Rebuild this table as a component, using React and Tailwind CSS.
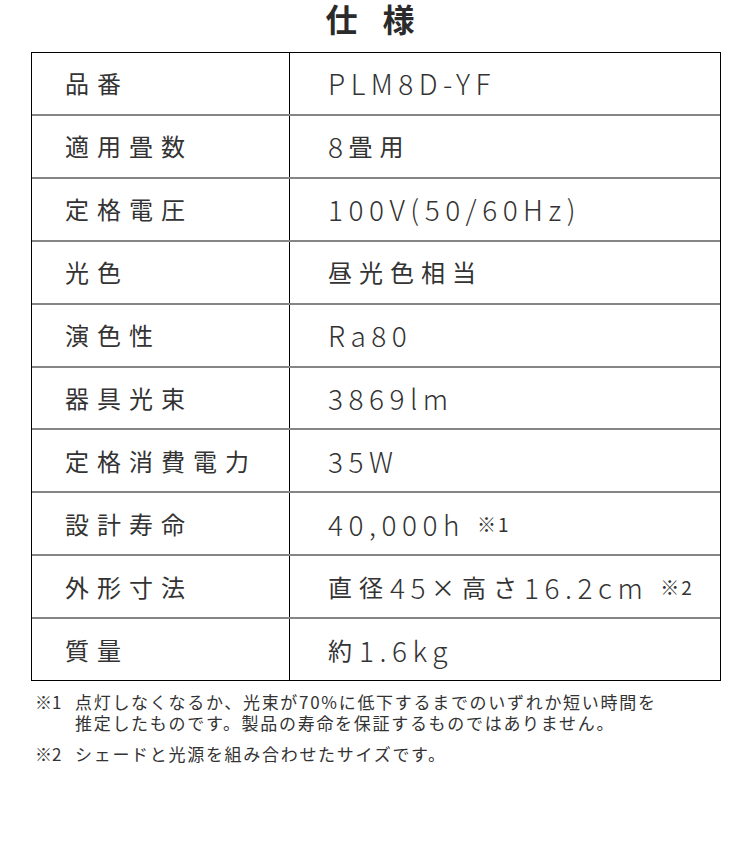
import React from 'react';

const specs = [
  ['品番', 'PLM8D-YF'],
  ['適用畳数', '8畳用'],
  ['定格電圧', '100V(50/60Hz)'],
  ['光色', '昼光色相当'],
  ['演色性', 'Ra80'],
  ['器具光束', '3869lm'],
  ['定格消費電力', '35W'],
  ['設計寿命', '40,000h', '※1'],
  ['外形寸法', '直径45×高さ16.2cm', '※2'],
  ['質量', '約1.6kg'],
];

// split into CJK and latin runs, latin is set a bit larger like the original
const Value = ({ text }) =>
  text
    .split(/([\u3040-\u30ff\u4e00-\u9fff×]+)/)
    .filter(Boolean)
    .map((part, i) =>
      /[\u3040-\u30ff\u4e00-\u9fff×]/.test(part) ? (
        <span key={i} className="text-[24px] tracking-[7px]">{part}</span>
      ) : (
        <span key={i} className="text-[28px] font-light tracking-[5.5px]">{part}</span>
      )
    );

const App = () => {
  return (
    <div
      className="w-[750px] h-[845px] bg-white text-[#333]"
      style={{ fontFamily: '"Noto Sans CJK JP", "Noto Sans", sans-serif' }}
    >
      <h1 className="h-[52px] pt-[1px] flex justify-center gap-[25px] pr-[10px] text-[32px] font-bold leading-[34px] text-[#2b2b2b]">
        <span>仕</span>
        <span>様</span>
      </h1>

      <div className="ml-[31px] w-[690px] h-[629px] border-[1.5px] border-black flex flex-col">
        {specs.map(([label, value, note], i) => (
          <div
            key={label}
            className={`flex-1 flex ${i > 0 ? 'border-t-2 border-[#858585]' : ''}`}
          >
            <div className="w-[258px] shrink-0 border-r-[1.5px] border-black flex items-center pl-[33px] text-[24px] tracking-[8px]">
              {label}
            </div>
            <div className="flex-1 flex items-center pl-[38px] leading-none">
              <Value text={value} />
              {note && <span className="ml-[12px] text-[19px] tracking-[2px]">{note}</span>}
            </div>
          </div>
        ))}
      </div>

      <div className="mt-[10px] pl-[35px] text-[17px] leading-[21px] tracking-[1.7px] text-[#333]">
        <div className="flex">
          <span className="w-[40px] shrink-0 tracking-normal">※1</span>
          <p>
            点灯しなくなるか、光束が70%に低下するまでのいずれか短い時間を
            <br />
            推定したものです。製品の寿命を保証するものではありません。
          </p>
        </div>
        <div className="flex mt-[10px]">
          <span className="w-[40px] shrink-0 tracking-normal">※2</span>
          <p>シェードと光源を組み合わせたサイズです。</p>
        </div>
      </div>
    </div>
  );
};

export default App;
